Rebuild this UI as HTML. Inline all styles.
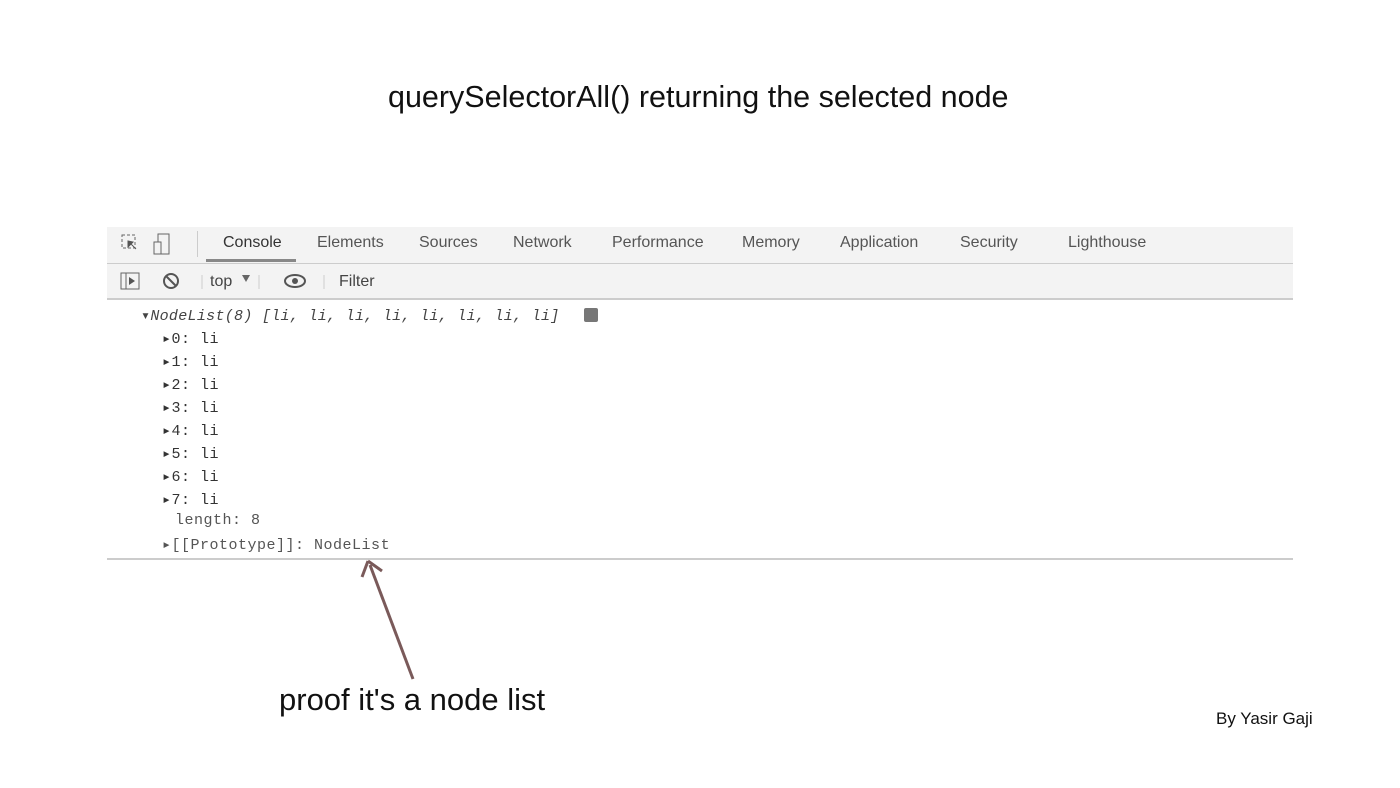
<!DOCTYPE html><html><head><style>
body{margin:0;width:1400px;height:788px;background:#fff;position:relative;overflow:hidden;font-family:"Liberation Sans",sans-serif}
.a{position:absolute;white-space:nowrap}
.tab{position:absolute;top:234px;font-size:16px;color:#555}
.m{font-family:"Liberation Mono",monospace;font-size:15px;letter-spacing:0.5px;color:#333;position:absolute;left:162px}
</style></head><body>
<div class="a" style="left:388px;top:80px;font-size:30.5px;color:#111">querySelectorAll() returning the selected node</div>
<div class="a" style="left:107px;top:227px;width:1186px;height:36px;background:#f3f3f3;border-bottom:1px solid #ccc"></div>
<div class="a" style="left:107px;top:264px;width:1186px;height:34px;background:#f3f3f3;border-bottom:2px solid #ccc"></div>
<svg class="a" style="left:118px;top:232px" width="70" height="24"><rect x="4" y="3" width="13" height="13" fill="none" stroke="#666" stroke-dasharray="3 2"/><path d="M10 9l8 8M10 9l0 6l5-5z" stroke="#555" fill="#555"/><rect x="40" y="2" width="11" height="20" fill="none" stroke="#666"/><rect x="36" y="10" width="7" height="12" fill="#f3f3f3" stroke="#666"/></svg>
<div class="a" style="left:197px;top:231px;width:1px;height:26px;background:#ccc"></div>
<div class="tab" style="left:223px;color:#333">Console</div>
<div class="a" style="left:206px;top:259px;width:90px;height:3px;background:#888"></div>
<div class="tab" style="left:317px">Elements</div><div class="tab" style="left:419px">Sources</div><div class="tab" style="left:513px">Network</div><div class="tab" style="left:612px">Performance</div><div class="tab" style="left:742px">Memory</div><div class="tab" style="left:840px">Application</div><div class="tab" style="left:960px">Security</div><div class="tab" style="left:1068px">Lighthouse</div>
<svg class="a" style="left:118px;top:270px" width="220" height="24"><rect x="3" y="3" width="18" height="16" fill="none" stroke="#666"/><path d="M8 3v16" stroke="#666"/><path d="M11 7l6 4l-6 4z" fill="#555"/><circle cx="53" cy="11" r="7" fill="none" stroke="#555" stroke-width="2"/><path d="M48 6l10 10" stroke="#555" stroke-width="2"/><path d="M84 5v14" stroke="#ccc"/><path d="M128 5l-4 7h8z" transform="rotate(180 128 8.5)" fill="#666"/><path d="M141 5v14" stroke="#ccc"/><ellipse cx="177" cy="11" rx="10" ry="6" fill="none" stroke="#555" stroke-width="2"/><circle cx="177" cy="11" r="3" fill="#555"/><path d="M206 5v14" stroke="#ccc"/></svg>
<div class="a" style="left:210px;top:273px;font-size:16px;color:#444">top</div>
<div class="a" style="left:339px;top:273px;font-size:16px;color:#444">Filter</div>
<div class="a" style="left:141px;top:306px;font-family:'Liberation Mono',monospace;font-style:italic;font-size:15px;letter-spacing:0.3px;color:#444">▾NodeList(8) [li, li, li, li, li, li, li, li]</div>
<div class="a" style="left:584px;top:308px;width:14px;height:14px;background:#777;border-radius:2px"></div>
<div class="m" style="top:329px">▸0: li</div><div class="m" style="top:352px">▸1: li</div><div class="m" style="top:375px">▸2: li</div><div class="m" style="top:398px">▸3: li</div><div class="m" style="top:421px">▸4: li</div><div class="m" style="top:444px">▸5: li</div><div class="m" style="top:467px">▸6: li</div><div class="m" style="top:490px">▸7: li</div>
<div class="m" style="top:512px;left:175px;color:#555">length: 8</div>
<div class="m" style="top:535px;color:#555">▸[[Prototype]]: NodeList</div>
<div class="a" style="left:107px;top:558px;width:1186px;height:2px;background:#ccc"></div>
<svg class="a" style="left:350px;top:555px" width="80" height="130"><path d="M63 124L20 10" stroke="#7a5a5a" stroke-width="3"/><path d="M18 6l-6 16M18 6l14 10" stroke="#7a5a5a" stroke-width="3" fill="none"/></svg>
<div class="a" style="left:279px;top:682px;font-size:31px;color:#111">proof it's a node list</div>
<div class="a" style="left:1216px;top:709px;font-size:17px;color:#111">By Yasir Gaji</div>
</body></html>
